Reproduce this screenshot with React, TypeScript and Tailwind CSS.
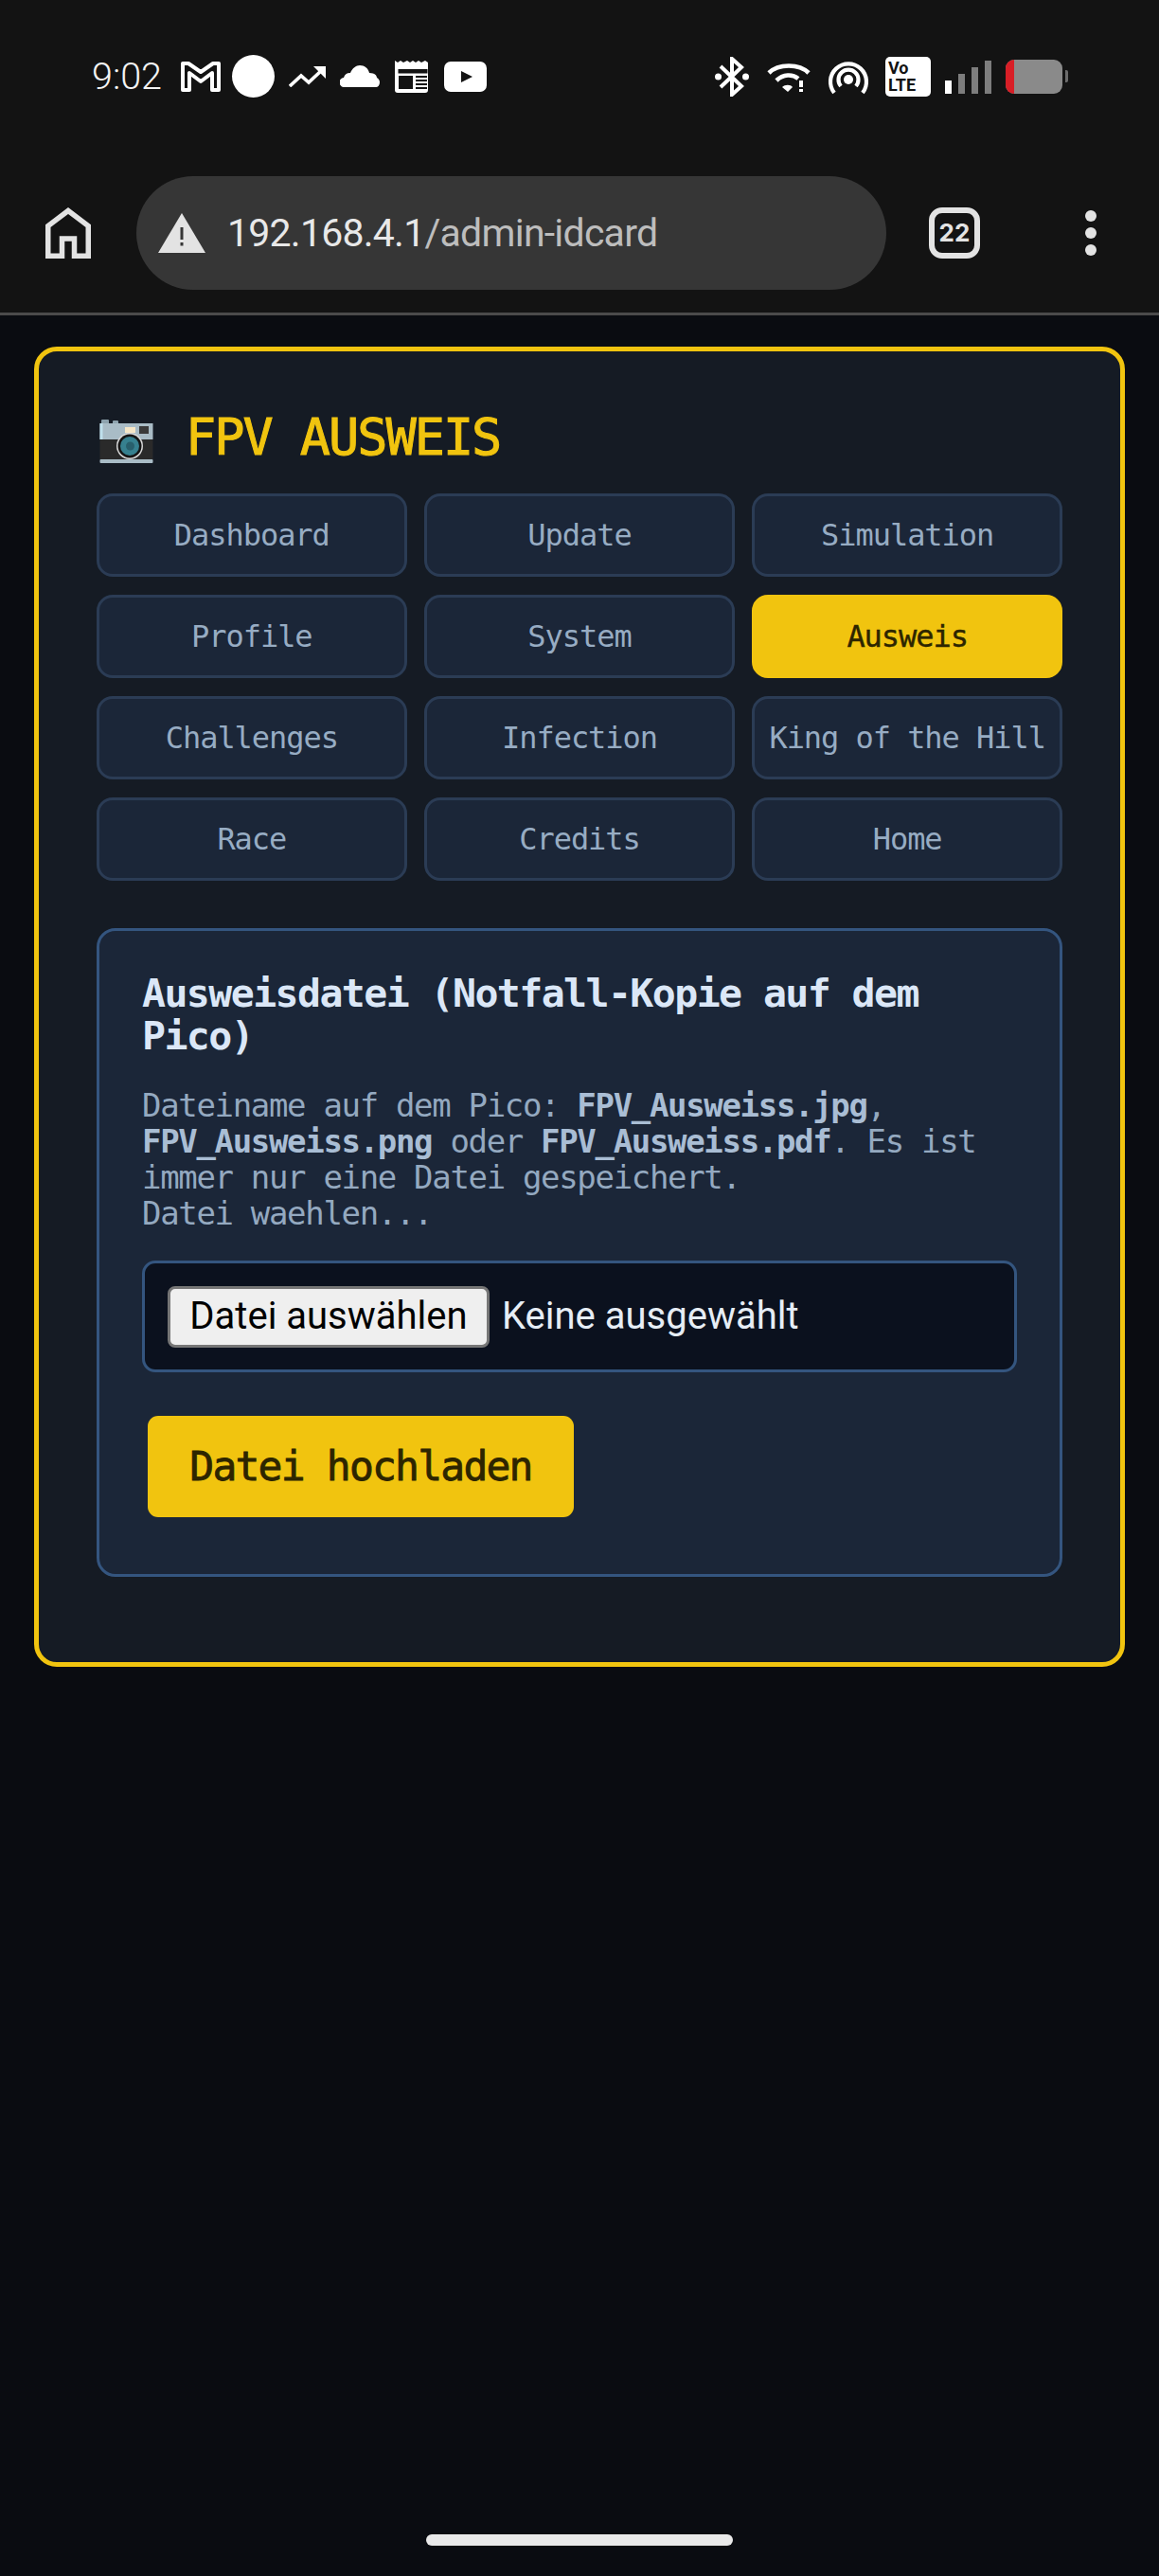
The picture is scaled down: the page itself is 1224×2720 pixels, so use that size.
import React from "react";

const tabs = ["Dashboard","Update","Simulation","Profile","System","Ausweis","Challenges","Infection","King of the Hill","Race","Credits","Home"];

function StatusLeft() {
  return (
    <div className="flex items-center">
      <span className="w-[94px] text-[39.5px] leading-[46px] text-[#f4f4f4] font-['Roboto',sans-serif] font-light">9:02</span>
      <svg width="42" height="32" viewBox="0 0 42 32" fill="none" stroke="white" strokeWidth="4"><path d="M2 2h6l13 9 13-9h6v28h-7V12l-12 9-12-9v18H2z" strokeLinejoin="round"/></svg>
      <div className="ml-[12px] w-[45px] h-[45px] rounded-full bg-white" />
      <svg className="ml-[15px]" width="39" height="22" viewBox="0 0 39 22" fill="none" stroke="white" strokeWidth="3.6"><path d="M1 21 L13 10 L21 17 L35 4"/><path d="M26 0h13v13z" fill="white" stroke="none"/></svg>
      <svg className="ml-[15px]" width="42" height="23" viewBox="0 0 42 23" fill="white"><path d="M5 23a5 5 0 0 1-1-10 7 7 0 0 1 7-5C13 3 17 0 21 0c5 0 9 3 10 8 6 0 8 3 8 5 2 1 3 3 3 5 0 3-2 5-4 5z"/></svg>
      <svg className="ml-[16px]" width="38" height="34" viewBox="0 0 38 34"><path d="M0 0l3 2 3-2 3 2 4-2 3 2 3-2 3 2 3-2 3 2 4-2 3 2v29a3 3 0 0 1-3 3H3a3 3 0 0 1-3-3z" fill="white"/><rect x="3.5" y="9" width="31" height="4.5" fill="#131313"/><rect x="4" y="16" width="15" height="14" fill="#131313"/><path d="M22 17h12M22 21h12M22 25h12M22 29h12" stroke="#131313" strokeWidth="1.8"/></svg>
      <svg className="ml-[14px]" width="45" height="32" viewBox="0 0 45 32"><rect width="45" height="32" rx="7" fill="white"/><path d="M18 10l12 6-12 6z" fill="#131313"/></svg>
    </div>
  );
}

function StatusRight() {
  return (
    <div className="flex items-center">
      <svg width="36" height="42" viewBox="0 0 36 42" fill="none" stroke="white" strokeWidth="4"><path d="M6 10l22 21-10 9V2l10 9L6 32"/><circle cx="3.5" cy="21" r="3.5" fill="white" stroke="none"/><circle cx="32.5" cy="21" r="3.5" fill="white" stroke="none"/></svg>
      <svg className="ml-[19px]" width="46" height="32" viewBox="0 0 46 32" fill="none" stroke="white"><path d="M2 12C12 2 34 2 44 12" strokeWidth="4.6"/><path d="M10 20C17 13 27 13 33 18" strokeWidth="4.6"/><path d="M16 27c3-3 9-3 11 0l-5 5z" fill="white" stroke="none"/><rect x="34" y="20" width="4" height="7" fill="white" stroke="none"/><rect x="34" y="29" width="4" height="3.5" fill="white" stroke="none"/></svg>
      <svg className="ml-[18px]" width="44" height="38" viewBox="0 0 44 38" fill="none" stroke="white" strokeWidth="4.2"><path d="M7 36A19 19 0 1 1 37 36"/><path d="M14 29a10.5 10.5 0 1 1 16 0"/><circle cx="22" cy="22" r="5" fill="white" stroke="none"/></svg>
      <div className="ml-[17px] w-[48px] h-[42px] rounded-[5px] bg-white flex flex-col justify-center pl-[3px] text-[18px] leading-[18px] font-bold text-[#131313] font-['Roboto',sans-serif]">
        <span>Vo</span><span>LTE</span>
      </div>
      <div className="ml-[15px] flex items-end gap-[7px] h-[36px]">
        <div className="w-[7px] h-[14px] bg-white" />
        <div className="w-[7px] h-[21px] bg-[#7d7d7d]" />
        <div className="w-[7px] h-[28px] bg-[#7d7d7d]" />
        <div className="w-[7px] h-[35px] bg-[#7d7d7d]" />
      </div>
      <div className="ml-[15px] flex items-center">
        <div className="w-[60px] h-[36px] rounded-[9px] bg-[#8a8a8a] overflow-hidden">
          <div className="w-[9px] h-full bg-[#d81e26]" />
        </div>
        <div className="ml-[3px] w-[3px] h-[13px] rounded-r-[2px] bg-[#6c6c6c]" />
      </div>
    </div>
  );
}

function Camera() {
  return (
    <svg width="57" height="46" viewBox="0 0 57 46">
      <rect x="2" y="0" width="8" height="6" rx="1" fill="#8ea3ae"/>
      <rect x="14" y="1" width="6" height="5" rx="1" fill="#8ea3ae"/>
      <rect x="0.5" y="4" width="56" height="17" fill="#a9bcc6"/>
      <rect x="0.5" y="4" width="3" height="17" fill="#bfe0ec"/>
      <rect x="0.5" y="21" width="56" height="21" fill="#2a2a2a"/>
      <rect x="0.5" y="42" width="56" height="4" rx="1" fill="#a9bcc6"/>
      <rect x="27" y="8" width="11" height="6" fill="#f6e7c8"/>
      <rect x="42" y="7" width="10" height="8" fill="#3a3a3a"/>
      <circle cx="32" cy="28" r="14" fill="#d8d8d8"/>
      <circle cx="32" cy="28" r="12.5" fill="#151515"/>
      <circle cx="32" cy="28" r="10" fill="#36808f"/>
      <circle cx="32.5" cy="28" r="4.5" fill="#285f6c"/>
    </svg>
  );
}

export default function App() {
  return (
    <div className="w-[1224px] h-[2720px] bg-[#0a0c11] flex flex-col overflow-hidden font-['DejaVu_Sans_Mono',monospace]">
      <header className="h-[333px] shrink-0 bg-[#131313] border-b-[3px] border-[#4b4b4b]">
        <div className="pt-[58px] pl-[97px] pr-[96px] flex items-center justify-between h-[103px]">
          <StatusLeft />
          <StatusRight />
        </div>
        <div className="mt-[83px] flex items-center h-[120px]">
          <svg className="ml-[48px]" width="48" height="54" viewBox="0 0 48 54" fill="none" stroke="#e3e3e3" strokeWidth="5.5"><path d="M2.75 51.25V19.5L24 3.5l21.25 16v31.75H30.5V33h-13v18.25z"/></svg>
          <div className="ml-[48px] w-[792px] h-[120px] rounded-full bg-[#363636] flex items-center">
            <svg className="ml-[23px]" width="50" height="42" viewBox="0 0 50 42"><path d="M25 0l25 42H0z" fill="#e3e3e3"/><rect x="23.5" y="15" width="3" height="13" fill="#363636"/><rect x="23.5" y="31" width="3" height="3.5" fill="#363636"/></svg>
            <span className="ml-[23px] text-[41px] tracking-[-0.76px] leading-none font-['Roboto',sans-serif] font-normal text-[#e8e8e8]">192.168.4.1<span className="text-[#bdbdbd]">/admin-idcard</span></span>
          </div>
          <div className="ml-[45px] w-[54px] h-[54px] rounded-[14px] border-[6px] border-[#e3e3e3] flex items-center justify-center text-[26px] font-bold text-[#e3e3e3] font-['Inter',sans-serif] leading-none">22</div>
          <div className="ml-[111px] flex flex-col gap-[6px]">
            <div className="w-[12px] h-[12px] rounded-full bg-[#e3e3e3]" />
            <div className="w-[12px] h-[12px] rounded-full bg-[#e3e3e3]" />
            <div className="w-[12px] h-[12px] rounded-full bg-[#e3e3e3]" />
          </div>
        </div>
      </header>

      <main className="mx-[36px] mt-[33px] h-[1394px] shrink-0 rounded-[24px] border-[5px] border-[#f1c40f] bg-[#151b24] px-[61px] pt-[70px]">
        <div className="flex items-center h-[46px] mt-[2px]">
          <div className="ml-[3px] w-[57px]"><Camera /></div>
          <h1 className="ml-[34px] pb-[9px] text-[53.5px] tracking-[-2px] leading-[46px] font-normal text-[#f1c40f] [-webkit-text-stroke:1px_#f1c40f]">FPV AUSWEIS</h1>
        </div>
        <nav className="mt-[32px] grid grid-cols-3 gap-x-[18.5px] gap-y-[19px]">
          {tabs.map((t) => (
            <div
              key={t}
              className={
                t === "Ausweis"
                  ? "h-[88px] rounded-[17px] border-[3px] border-[#f1c40f] bg-[#f1c40f] text-[#2d2500] flex items-center justify-center text-[32px] tracking-[-1.05px] whitespace-nowrap [-webkit-text-stroke:0.4px_#2d2500]"
                  : "h-[88px] rounded-[17px] border-[3px] border-[#2b3c55] bg-[#1b2638] text-[#97acc3] flex items-center justify-center text-[32px] tracking-[-1.05px] whitespace-nowrap"
              }
            >
              {t}
            </div>
          ))}
        </nav>
        <section className="mt-[50px] h-[685px] rounded-[20px] border-[3px] border-[#34557f] bg-[#1b2638] pl-[45px] pr-[45px] pt-[43px]">
          <h2 className="text-[41.5px] tracking-[-1.56px] leading-[45px] font-bold text-[#dbe7f7]">Ausweisdatei (Notfall-Kopie auf dem Pico)</h2>
          <p className="mt-[32px] text-[34px] tracking-[-1.33px] leading-[38px] text-[#94a9c0]">
            Dateiname auf dem Pico: <b className="text-[#a9bdd4]">FPV_Ausweiss.jpg</b>, <b className="text-[#a9bdd4]">FPV_Ausweiss.png</b> oder <b className="text-[#a9bdd4]">FPV_Ausweiss.pdf</b>. Es ist immer nur eine Datei gespeichert.
            <br />Datei waehlen...
          </p>
          <div className="mt-[31px] h-[118px] rounded-[14px] border-[3px] border-[#34557f] bg-[#0b111e] flex items-center pl-[24px] font-['Roboto',sans-serif] text-[40px]">
            <div className="w-[340px] h-[65px] rounded-[8px] border-[3px] border-[#767676] bg-[#efefef] text-black flex items-center justify-center">Datei auswählen</div>
            <span className="ml-[13px] text-[#e6edf5]">Keine ausgewählt</span>
          </div>
          <div className="mt-[46px] ml-[6px] w-[450px] h-[107px] rounded-[11px] bg-[#f1c40f] text-[#2d2500] flex items-center justify-center text-[43px] tracking-[-1.8px] [-webkit-text-stroke:0.8px_#2d2500]">Datei hochladen</div>
        </section>
      </main>

      <div className="mt-auto mb-[32px] mx-auto w-[324px] h-[12px] rounded-[6px] bg-[#e9e9e9]" />
    </div>
  );
}
